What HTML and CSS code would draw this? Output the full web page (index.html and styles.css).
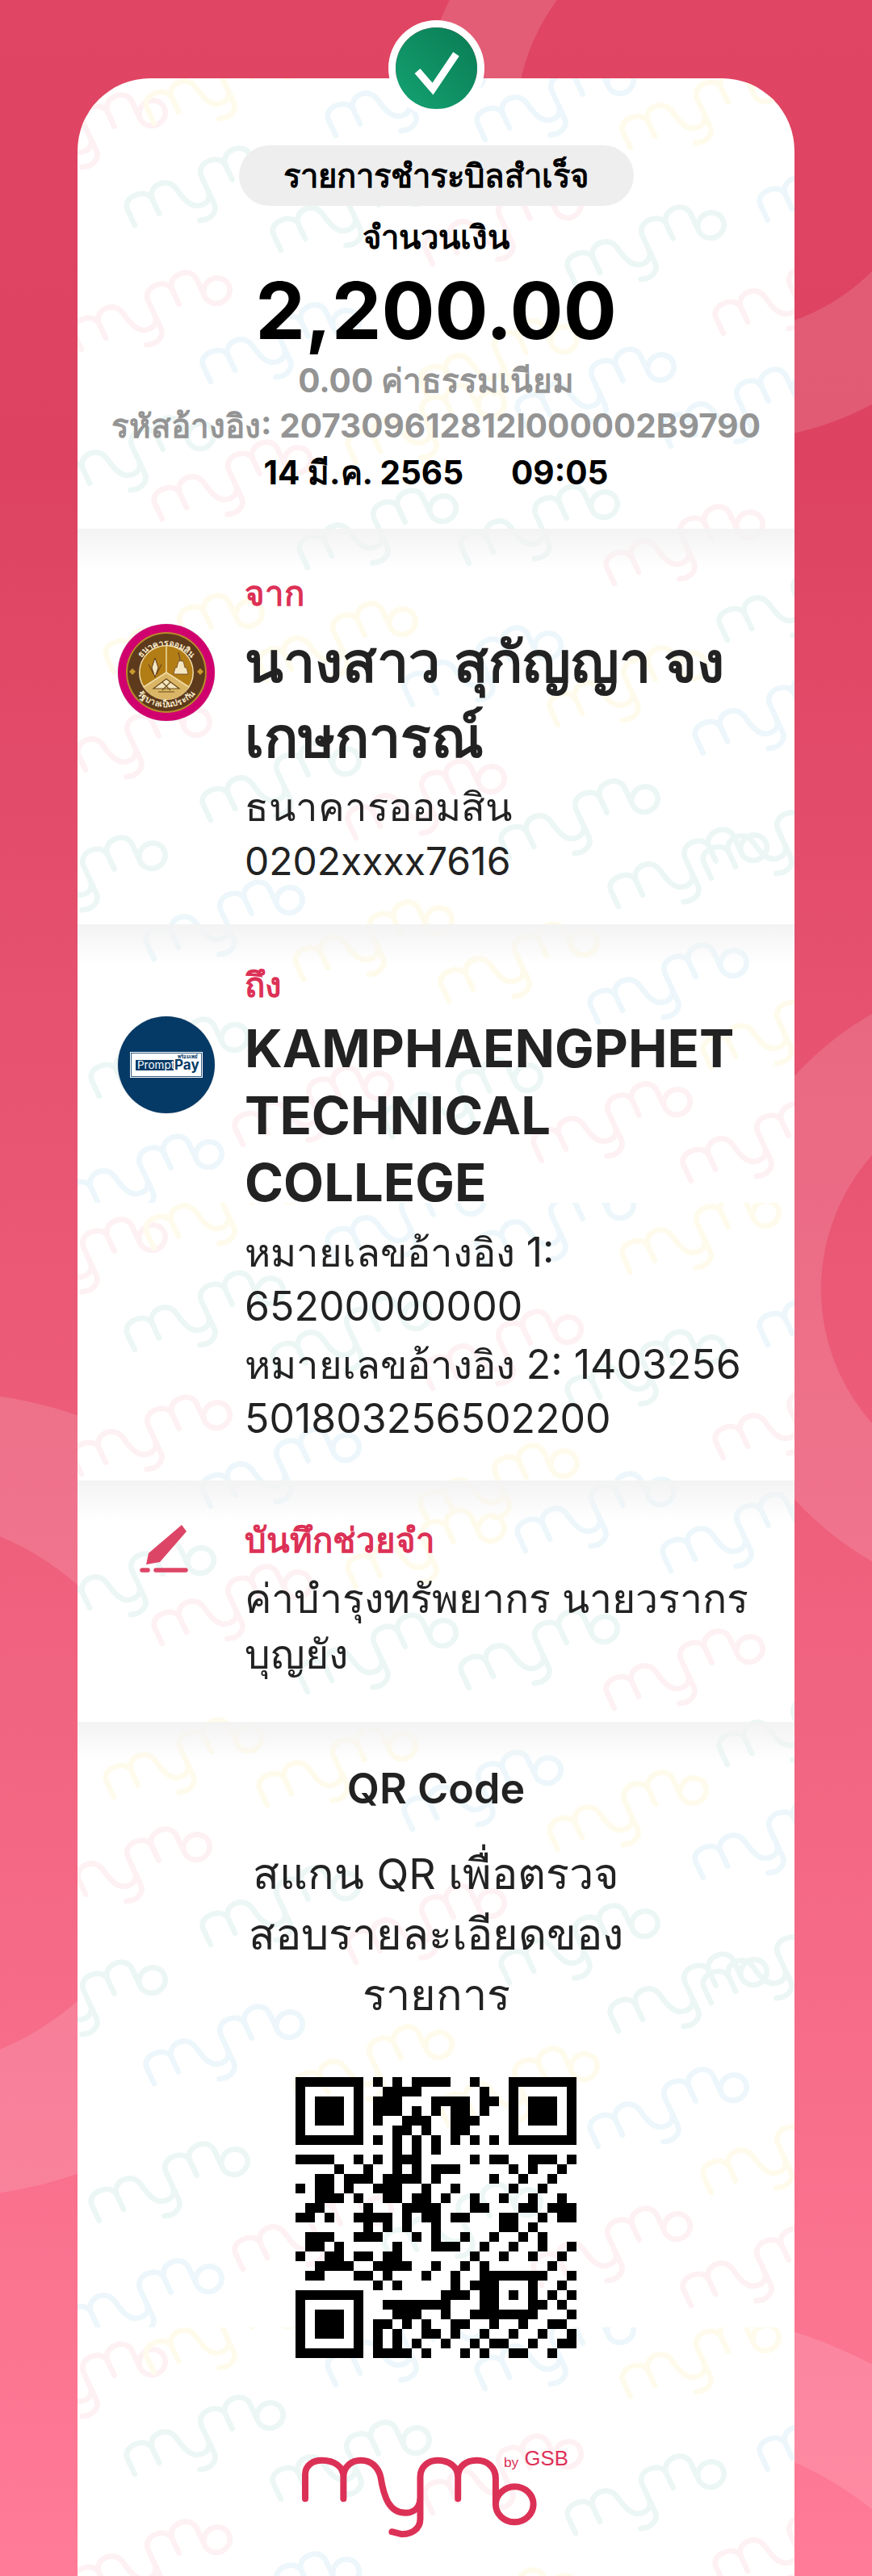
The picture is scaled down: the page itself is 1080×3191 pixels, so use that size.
FILE: index.html
```html
<!DOCTYPE html>
<html lang="th">
<head>
    <meta charset="UTF-8">
    <meta name="viewport" content="width=device-width, initial-scale=1.0">
    <title>mymo by GSB</title>
    <link rel="stylesheet" href="styles.css">
</head>
<body>
    <div class="page">
        <!-- background rings -->
        <svg class="rings" viewBox="0 0 1080 3191" width="1080" height="3191">
            <g fill="#fff" fill-opacity=".13" fill-rule="evenodd">
                <path d="M519 165a381 381 0 1 0 762 0a381 381 0 1 0 -762 0zM639 154a258 258 0 1 0 516 0a258 258 0 1 0 -516 0z"/>
                <path d="M883 1595a390 390 0 1 0 780 0a390 390 0 1 0 -780 0zM1017 1597a250 250 0 1 0 500 0a250 250 0 1 0 -500 0z"/>
                <path d="M-568 2223a498 498 0 1 0 996 0a498 498 0 1 0 -996 0zM-476 2221a344 344 0 1 0 688 0a344 344 0 1 0 -688 0z"/>
                <path d="M201 3460a600 600 0 1 0 1200 0a600 600 0 1 0 -1200 0zM352 3460a449 449 0 1 0 898 0a449 449 0 1 0 -898 0z"/>
            </g>
        </svg>

        <div class="card">
            <!-- mymo watermark, one tile of scattered marks -->
            <svg class="watermark" width="888" height="3094">
                <defs>
                    <path id="mymo" d="M118 345V255C118 222 145 203 180 203C225 203 260 225 260 265V345M260 265C260 225 290 203 325 203C365 203 390 230 398 265C410 340 430 398 490 398C520 398 545 380 545 340V265C545 225 575 203 610 203C650 203 685 225 685 265V345M685 265C685 225 715 203 755 203C795 203 825 230 825 270V365A70 66 0 1 0 895 300C860 300 825 330 825 365M545 340V420C545 460 510 477 475 477L440 468"/>
                    <use id="wm" href="#mymo" transform="rotate(-25) scale(.235) translate(-539 -340)"/>
                    <pattern id="wm-tile" width="888" height="1393" patternUnits="userSpaceOnUse">
                        <g class="wm-teal">
                            <use href="#wm" x="160" y="139"/><use href="#wm" x="341" y="170"/><use href="#wm" x="706" y="212"/>
                            <use href="#wm" x="74" y="473"/><use href="#wm" x="374" y="563"/><use href="#wm" x="574" y="558"/>
                            <use href="#wm" x="894" y="653"/><use href="#wm" x="254" y="876"/><use href="#wm" x="624" y="923"/>
                            <use href="#wm" x="874" y="948"/><use href="#wm" x="14" y="993"/><use href="#wm" x="759" y="983"/>
                            <use href="#wm" x="116" y="1218"/><use href="#wm" x="479" y="1268"/>
                        </g>
                        <g class="wm-pink">
                            <use href="#wm" x="529" y="187"/><use href="#wm" x="14" y="73"/><use href="#wm" x="889" y="273"/>
                            <use href="#wm" x="94" y="293"/><use href="#wm" x="194" y="503"/><use href="#wm" x="754" y="583"/>
                            <use href="#wm" x="69" y="828"/><use href="#wm" x="434" y="898"/><use href="#wm" x="294" y="1278"/>
                            <use href="#wm" x="664" y="1298"/><use href="#wm" x="849" y="1323"/>
                        </g>
                        <g class="wm-blue">
                            <use href="#wm" x="409" y="28"/><use href="#wm" x="594" y="33"/><use href="#wm" x="944" y="133"/>
                            <use href="#wm" x="254" y="333"/><use href="#wm" x="644" y="388"/><use href="#wm" x="824" y="413"/>
                            <use href="#wm" x="504" y="733"/><use href="#wm" x="864" y="793"/><use href="#wm" x="184" y="1048"/>
                            <use href="#wm" x="734" y="1126"/><use href="#wm" x="84" y="1363"/>
                        </g>
                        <g class="wm-yellow">
                            <use href="#wm" x="184" y="13"/><use href="#wm" x="774" y="43"/><use href="#wm" x="524" y="353"/>
                            <use href="#wm" x="434" y="433"/><use href="#wm" x="134" y="693"/><use href="#wm" x="324" y="703"/>
                            <use href="#wm" x="684" y="758"/><use href="#wm" x="369" y="1073"/><use href="#wm" x="549" y="1100"/>
                            <use href="#wm" x="874" y="1183"/>
                        </g>
                    </pattern>
                </defs>
                <rect width="888" height="3094" fill="url(#wm-tile)"/>
            </svg>

            <div class="check">
                <svg viewBox="0 0 101 101" width="101" height="101">
                    <path d="M27 54L46 76L75 33" fill="none" stroke="#fff" stroke-width="9"/>
                </svg>
            </div>

            <section class="head">
                <div class="pill">รายการชำระบิลสำเร็จ</div>
                <div class="label">จำนวนเงิน</div>
                <div class="amount">2,200.00</div>
                <div class="fee">0.00 ค่าธรรมเนียม</div>
                <div class="fee">รหัสอ้างอิง: 207309612812I000002B9790</div>
                <div class="date"><span>14 มี.ค. 2565</span><span>09:05</span></div>
            </section>

            <section class="row row-from">
                <div class="row-icon">
                    <svg viewBox="-61 -61 122 122" width="122" height="122">
                        <defs>
                            <path id="arc-top" d="M-39 6A39 39 0 0 1 39 6"/>
                            <path id="arc-bottom" d="M-47 -4A47 47 0 0 0 47 -4"/>
                        </defs>
                        <circle r="60.5" fill="#d8d8d8"/>
                        <circle r="60" fill="#d1006f"/>
                        <circle r="50" fill="#b78a2a"/>
                        <circle r="48" fill="#5e3a1c"/>
                        <circle r="34" fill="#f0dca8"/>
                        <circle r="32.5" fill="#b27d15"/>
                        <path d="M0 0L-28 18A33 33 0 0 0 28 18Z" fill="#d9b565"/>
                        <path d="M0 -32V0L-28 18M0 0L28 18" fill="none" stroke="#f0dca8" stroke-width="1.5"/>
                        <path d="M-14 -18L-10 -6L-14 6L-18 -6ZM-22 -10L-16 2M-6 -10L-12 2" fill="#f4e6c0" stroke="#5e3a1c" stroke-width="1"/>
                        <path d="M15 -25L18 -14H21L23 -6H25L27 2H9L11 -6H13L15 -14H17Z" fill="#f4e6c0" stroke="#5e3a1c" stroke-width=".7"/>
                        <path d="M0 8L-16 20H16ZM-10 24H10M-5 12L5 22M5 12L-5 22" fill="#f4e6c0" stroke="#6b4a1a" stroke-width="1.2"/>
                        <path d="M-42 -5L-38 -1L-42 3L-46 -1ZM42 -5L46 -1L42 3L38 -1Z" fill="#c9982f"/>
                        <text class="seal-text"><textPath href="#arc-top" startOffset="50%" text-anchor="middle">ธนาคารออมสิน</textPath></text>
                        <text class="seal-text"><textPath href="#arc-bottom" startOffset="50%" text-anchor="middle">รัฐบาลเป็นประกัน</textPath></text>
                    </svg>
                </div>
                <div class="row-text">
                    <div class="tag">จาก</div>
                    <div class="name">นางสาว สุกัญญา จง<br>เกษการณ์</div>
                    <div class="sub">ธนาคารออมสิน<br><span class="num acct">0202xxxx7616</span></div>
                </div>
            </section>

            <section class="row row-to">
                <div class="row-icon">
                    <svg viewBox="-61 -61 122 122" width="122" height="122">
                        <circle r="60.5" fill="#d8d8d8"/>
                        <circle r="60" fill="#063a66"/>
                        <rect x="-45" y="-16" width="90" height="32" fill="#fff"/>
                        <rect x="-43.500" y="-14.500" width="87" height="29" fill="none" stroke="#063a66" stroke-width=".8"/>
                        <rect x="-38" y="-6" width="47" height="13" fill="#063a66"/>
                        <text class="pp-prompt" x="-36" y="5">Prompt</text>
                        <text class="pp-pay" x="10" y="6">Pay</text>
                        <text class="pp-thai" x="39" y="-8" text-anchor="end">พร้อมเพย์</text>
                    </svg>
                </div>
                <div class="row-text">
                    <div class="tag">ถึง</div>
                    <div class="name name-en">KAMPHAENGPHET TECHNICAL COLLEGE</div>
                    <div class="sub sub-first">หมายเลขอ้างอิง <span class="num">1:<br>65200000000</span></div>
                    <div class="sub sub-next">หมายเลขอ้างอิง <span class="num">2: 1403256<br>501803256502200</span></div>
                </div>
            </section>

            <section class="row row-memo">
                <div class="row-icon">
                    <svg class="pen" viewBox="0 0 60 60" width="60" height="60">
                        <path d="M52 0L58 8L25 46L8 49L11 35Z" fill="#dd4566"/>
                        <path d="M3 56H10M20 56H57" fill="none" stroke="#dd4566" stroke-width="5.500" stroke-linecap="round"/>
                    </svg>
                </div>
                <div class="row-text">
                    <div class="tag">บันทึกช่วยจำ</div>
                    <div class="memo">ค่าบำรุงทรัพยากร นายวรากร<br>บุญยัง</div>
                </div>
            </section>

            <section class="qr">
                <div class="qr-title">QR Code</div>
                <div class="qr-text">สแกน <span class="qr-latin">QR</span> เพื่อตรวจ<br>สอบรายละเอียดของ<br>รายการ</div>
                <svg class="qr-code" viewBox="0 0 29 29" width="348" height="348">
                    <defs>
                        <g id="finder">
                            <path d="M0 .5h7M0 6.500h7M.5 1v5M6.500 1v5M2 2.500h3M2 3.500h3M2 4.500h3" fill="none" stroke="#000"/>
                        </g>
                    </defs>
                    <use href="#finder"/>
                    <use href="#finder" x="22"/>
                    <use href="#finder" y="22"/>
                    <path fill="none" stroke="#000" d="
                        M8 .5h1M10 .5h1M12 .5h4M18 .5h1
                        M9 1.500h4M19 1.500h1
                        M8 2.500h3M14 2.500h4M19 2.500h2
                        M8 3.500h3M12 3.500h1M14 3.500h1M16 3.500h2M19 3.500h1
                        M8 4.500h1M11 4.500h3M16 4.500h3
                        M10 5.500h2M13 5.500h1M16 5.500h2
                        M8 6.500h1M10 6.500h1M12 6.500h1M14 6.500h1M16 6.500h1M18 6.500h1M20 6.500h1
                        M10 7.500h1M12 7.500h1M14 7.500h1
                        M0 8.500h4M6 8.500h1M8 8.500h1M10 8.500h3M18 8.500h1M20 8.500h2M24 8.500h3M28 8.500h1
                        M4 9.500h1M7 9.500h1M10 9.500h1M12 9.500h1M14 9.500h3M22 9.500h1M24 9.500h1M27 9.500h1
                        M2 10.500h2M5 10.500h3M9 10.500h4M14 10.500h1M20 10.500h1M23 10.500h1M26 10.500h1
                        M0 11.500h1M2 11.500h2M5 11.500h1M8 11.500h3M13 11.500h1M16 11.500h1M22 11.500h1M25 11.500h1
                        M2 12.500h3M6 12.500h1M9 12.500h2M12 12.500h2M15 12.500h1M18 12.500h1M21 12.500h1M24 12.500h1M27 12.500h1
                        M1 13.500h2M7 13.500h1M11 13.500h4M18 13.500h2M23 13.500h2M26 13.500h3
                        M0 14.500h2M3 14.500h1M6 14.500h4M11 14.500h1M13 14.500h2M16 14.500h2M21 14.500h2M25 14.500h1M27 14.500h2
                        M7 15.500h1M9 15.500h1M11 15.500h1M14 15.500h1M21 15.500h2M24 15.500h1
                        M1 16.500h3M6 16.500h3M12 16.500h1M14 16.500h1M17 16.500h1M20 16.500h1M23 16.500h1M25 16.500h1
                        M1 17.500h2M4 17.500h1M10 17.500h1M14 17.500h3M19 17.500h1M22 17.500h1M25 17.500h1M28 17.500h1
                        M0 18.500h1M3 18.500h2M6 18.500h2M9 18.500h2M18 18.500h1M21 18.500h1M24 18.500h1M27 18.500h1
                        M2 19.500h4M8 19.500h4M14 19.500h1M17 19.500h1M19 19.500h1M26 19.500h1
                        M1 20.500h2M6 20.500h2M9 20.500h1M13 20.500h1M16 20.500h1M19 20.500h7M28 20.500h1
                        M8 21.500h1M10 21.500h1M16 21.500h1M18 21.500h3M24 21.500h1M27 21.500h1
                        M15 22.500h3M19 22.500h2M22 22.500h1M24 22.500h1M26 22.500h1M28 22.500h1
                        M9 23.500h7M19 23.500h2M24 23.500h2M27 23.500h1
                        M10 24.500h3M15 24.500h1M18 24.500h7M28 24.500h1
                        M8 25.500h2M11 25.500h1M13 25.500h1M16 25.500h2M20 25.500h1M23 25.500h1M26 25.500h2
                        M8 26.500h1M10 26.500h1M13 26.500h2M16 26.500h1M19 26.500h1M22 26.500h1M25 26.500h1M28 26.500h1
                        M8 27.500h1M10 27.500h1M12 27.500h1M15 27.500h1M18 27.500h1M20 27.500h2M24 27.500h1M27 27.500h2
                        M8 28.500h4M13 28.500h1M17 28.500h1M19 28.500h1M22 28.500h2M26 28.500h1"/>
                </svg>
                <svg class="mymo-logo" viewBox="100 150 1010 350" width="337" height="117">
                    <use href="#mymo" fill="none" stroke="#dc3156" stroke-width="24" stroke-linecap="round" stroke-linejoin="round"/>
                    <text class="logo-by" x="855" y="228">by</text>
                    <text class="logo-gsb" x="932" y="222">GSB</text>
                </svg>
            </section>
        </div>
    </div>
</body>
</html>
```
FILE: styles.css
```css
* {
    box-sizing: border-box;
}
body {
    margin: 0;
    font-family: Inter, "Noto Sans", sans-serif;
    color: #222;
}
.page {
    position: relative;
    display: flex;
    height: 3191px;
    padding: 97px 96px 0;
    overflow: hidden;
    background: linear-gradient(#e04563, #dd4361 18%, #ff7b97);
}
.rings {
    position: absolute;
    left: 0;
    top: 0;
}
.card {
    position: relative;
    width: 888px;
    border-radius: 90px 90px 0 0;
    background: #fff;
}
.watermark {
    position: absolute;
    left: 0;
    top: 0;
    border-radius: 90px 90px 0 0;
}
.wm-teal, .wm-pink, .wm-blue, .wm-yellow {
    fill: none;
    stroke-width: 29;
    stroke-linecap: round;
    stroke-linejoin: round;
}
.wm-teal { stroke: #ecf7f5; }
.wm-pink { stroke: #fef1f3; }
.wm-blue { stroke: #edf7fb; }
.wm-yellow { stroke: #fffbec; }

.check {
    position: absolute;
    left: 394px;
    top: -63px;
    width: 101px;
    height: 101px;
    border-radius: 50%;
    background: linear-gradient(45deg, #14a372, #0a7b54);
    box-shadow: 0 0 0 9px #fff;
}
.check svg {
    display: block;
}

.head, .row, .qr {
    position: relative;
}
.head {
    height: 558px;
    padding-top: 83px;
    text-align: center;
    color: #000;
}
.pill {
    width: 489px;
    height: 75px;
    margin: 0 auto;
    border-radius: 38px;
    background: #eee;
    font-size: 40px;
    font-weight: 700;
    line-height: 75px;
}
.label {
    margin-top: 14px;
    font-size: 40px;
    font-weight: 700;
    line-height: 50px;
}
.amount {
    margin: 11px 0 4px;
    font-size: 98px;
    font-weight: 700;
    line-height: 110px;
}
.fee, .date {
    font-size: 40.500px;
    font-weight: 700;
    line-height: 56px;
    white-space: nowrap;
}
.fee {
    color: #949494;
}
.date {
    display: flex;
    justify-content: center;
    gap: 59px;
    margin-top: 2px;
}

.row {
    display: flex;
    gap: 37px;
    padding-left: 49px;
    background: linear-gradient(#f3f3f3, rgba(243, 243, 243, 0) 50px);
}
.row-from {
    height: 490px;
    padding-top: 52px;
}
.row-to {
    height: 689px;
    padding-top: 47px;
}
.row-memo {
    height: 299px;
    padding-top: 46px;
}
.row-icon {
    flex: none;
    width: 121px;
}
.row-icon svg {
    display: block;
}
.row-from .row-icon {
    margin-top: 65px;
}
.row-to .row-icon {
    margin-top: 66px;
}
.row-memo .pen {
    margin: 9px 0 0 28px;
}
.tag {
    font-size: 42px;
    font-weight: 700;
    line-height: 56px;
    color: #dc3156;
}
.name {
    margin-top: 10px;
    font-size: 70px;
    font-weight: 700;
    line-height: 93px;
}
.name-en {
    margin-top: 9px;
    font-size: 65px;
    line-height: 83px;
}
.sub {
    margin-top: 7px;
    font-size: 49px;
    line-height: 67px;
}
.sub-first {
    margin-top: 12px;
}
.sub-next {
    margin-top: 5px;
}
.num {
    font-size: 50px;
    line-height: 1;
}
.acct {
    font-size: 48px;
}
.memo {
    margin-top: 10px;
    font-size: 50px;
    line-height: 69px;
}

.seal-text {
    font-size: 10.500px;
    font-weight: 700;
    fill: #f6e9c8;
}
.pp-prompt {
    font-size: 13.500px;
    fill: #fff;
}
.pp-pay {
    font-size: 17px;
    font-weight: 700;
    fill: #063a66;
}
.pp-thai {
    font-size: 6px;
    font-weight: 700;
    fill: #063a66;
}

.qr {
    height: 1061px;
    padding-top: 48px;
    text-align: center;
    background: linear-gradient(#f3f3f3, rgba(243, 243, 243, 0) 50px);
}
.qr-title {
    font-size: 52px;
    font-weight: 600;
    line-height: 70px;
}
.qr-text {
    margin-top: 32px;
    font-size: 54px;
    line-height: 75px;
}
.qr-latin {
    font-size: 52px;
    line-height: 1;
}
.qr-code {
    display: block;
    margin: 65px auto 0;
    shape-rendering: crispEdges;
}
.mymo-logo {
    display: block;
    margin: 109px auto 0;
}
.logo-by, .logo-gsb {
    font-family: "Liberation Sans", sans-serif;
    fill: #dc3156;
}
.logo-by {
    font-size: 52px;
}
.logo-gsb {
    font-size: 77px;
}
```
